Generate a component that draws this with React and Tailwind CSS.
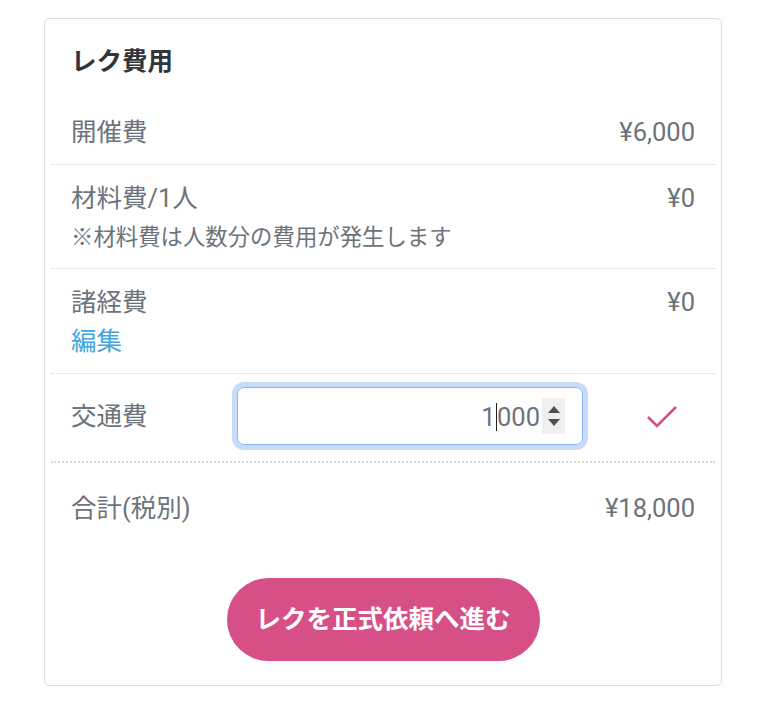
import React from "react";

const font = { fontFamily: "Roboto, 'Noto Sans CJK JP', sans-serif" };

function Spinner() {
  return (
    <div className="ml-[2px] flex h-[36px] w-[23px] flex-col items-center justify-center gap-[6px] bg-[#efefef]">
      <svg width="12" height="7" viewBox="0 0 12 7">
        <path d="M6 0 L12 7 L0 7 Z" fill="#505050" />
      </svg>
      <svg width="12" height="7" viewBox="0 0 12 7">
        <path d="M0 0 L12 0 L6 7 Z" fill="#505050" />
      </svg>
    </div>
  );
}

function App() {
  return (
    <div className="min-h-screen bg-white pt-[18px]" style={font}>
      <div className="ml-[44px] w-[678px] rounded-[5px] border border-[#dcdcdc] bg-white px-[6px] pb-[24px] text-[#6c737b]">
        {/* Title */}
        <div className="px-[20px] pt-[24px] pb-[20px]">
          <h2 className="text-[25.5px] font-bold leading-[36px] text-[#2f353b]">レク費用</h2>
        </div>

        {/* 開催費 */}
        <div className="flex items-start justify-between border-b border-dotted border-[#d6d6d6] px-[20px] pt-[15px] pb-[14px] text-[25.5px] leading-[36px]">
          <span>開催費</span>
          <span>¥6,000</span>
        </div>

        {/* 材料費 */}
        <div className="border-b border-dotted border-[#d6d6d6] px-[20px] pt-[15px] pb-[14px]">
          <div className="flex justify-between text-[25.5px] leading-[36px]">
            <span>材料費/1人</span>
            <span>¥0</span>
          </div>
          <p className="mt-[4px] text-[22.4px] leading-[34px]">※材料費は人数分の費用が発生します</p>
        </div>

        {/* 諸経費 */}
        <div className="border-b border-dotted border-[#d6d6d6] px-[20px] pt-[15px] pb-[14px]">
          <div className="flex justify-between text-[25.5px] leading-[36px]">
            <span>諸経費</span>
            <span>¥0</span>
          </div>
          <button className="mt-[3px] text-[25.5px] leading-[36px] text-[#44a6da]">編集</button>
        </div>

        {/* 交通費 */}
        <div className="flex items-center border-b-2 border-dotted border-[#d9d9d9] px-[20px] pt-[13px] pb-[16px]">
          <span className="w-[166px] text-[25.5px] leading-[36px]">交通費</span>
          <div className="flex h-[58px] w-[346px] items-center justify-end rounded-[7px] border border-[#8ab4f8] pr-[17px] ring-[5px] ring-[#c8dbfb]">
            <span className="text-[25.5px] leading-[36px] text-[#6c737b]">
              1<span className="inline-block h-[28px] w-[1.5px] translate-y-[5px] bg-[#222]" />000
            </span>
            <Spinner />
          </div>
          <div className="flex flex-1 justify-end pr-[17px]">
            <svg width="32" height="24" viewBox="0 0 32 24">
              <path d="M2 13 L11 22 L30 3" fill="none" stroke="#d64f86" strokeWidth="2.6" />
            </svg>
          </div>
        </div>

        {/* 合計 */}
        <div className="flex justify-between px-[20px] pt-[27px] text-[25.5px] leading-[36px]">
          <span>合計(税別)</span>
          <span>¥18,000</span>
        </div>

        <div className="mt-[52px] flex justify-center">
          <button className="h-[83px] w-[313px] rounded-full bg-[#d74f87] text-[25.5px] font-bold text-white">
            レクを正式依頼へ進む
          </button>
        </div>
      </div>
    </div>
  );
}

export default App;
